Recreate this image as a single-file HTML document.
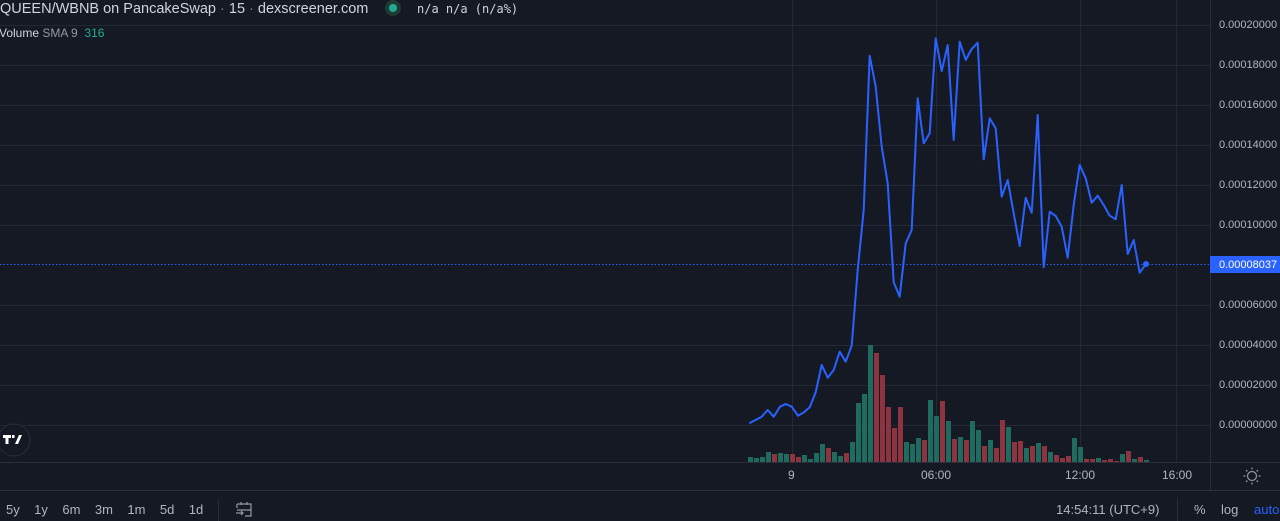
<!DOCTYPE html>
<html><head><meta charset="utf-8"><style>
body{margin:0;width:1280px;height:521px;background:#151924;overflow:hidden;font-family:"Liberation Sans",sans-serif;position:relative}
.t{position:absolute;white-space:nowrap}
.p{position:absolute;left:1219px;font-size:11px;color:#b2b5be;line-height:16px;white-space:nowrap}
</style></head><body>
<svg width="1280" height="521" style="position:absolute;left:0;top:0">
<g stroke="#242834" stroke-width="1">
<line x1="0" y1="25.5" x2="1210" y2="25.5"/><line x1="0" y1="65.5" x2="1210" y2="65.5"/><line x1="0" y1="105.5" x2="1210" y2="105.5"/><line x1="0" y1="145.5" x2="1210" y2="145.5"/><line x1="0" y1="185.5" x2="1210" y2="185.5"/><line x1="0" y1="225.5" x2="1210" y2="225.5"/><line x1="0" y1="305.5" x2="1210" y2="305.5"/><line x1="0" y1="345.5" x2="1210" y2="345.5"/><line x1="0" y1="385.5" x2="1210" y2="385.5"/><line x1="0" y1="425.5" x2="1210" y2="425.5"/>
<line x1="792.5" y1="0" x2="792.5" y2="462"/><line x1="936.5" y1="0" x2="936.5" y2="462"/><line x1="1080.5" y1="0" x2="1080.5" y2="462"/><line x1="1176.5" y1="0" x2="1176.5" y2="462"/>
</g>
<g stroke="#2a2e39"><line x1="1210.5" y1="0" x2="1210.5" y2="490"/><line x1="0" y1="462.5" x2="1280" y2="462.5"/><line x1="0" y1="490.5" x2="1280" y2="490.5"/><line x1="218.5" y1="499" x2="218.5" y2="521"/><line x1="1177.5" y1="499" x2="1177.5" y2="521"/></g>
<line x1="0" y1="264.5" x2="1210" y2="264.5" stroke="#2962ff" stroke-dasharray="1.5,2"/>
<g id="vol"></g>
<polyline fill="none" stroke="#2962ff" stroke-width="2" stroke-linejoin="round" points="749.3,423.3 761.7,416.7 767.7,410 773.7,416.7 780,406.7 785.7,404 791.7,406.7 798,415.7 804,412.3 809.7,407.3 815.7,392.3 821.7,365 827.7,377.7 833.7,370 839.7,351.7 845.7,361.7 851.7,345.7 857.7,270 863.7,210 869.7,55.7 875.7,86.7 881.7,146.7 887.7,183.3 893.7,282.3 899.7,296.7 905.7,243.3 911.7,230 917.7,98.3 923.7,143.3 929.7,133.3 935.7,38.3 941.7,71 947.7,45 953.7,140 959.7,41.7 965.7,60 971.7,49 977.7,42.7 983.7,159.3 989.7,118.3 995.7,128.3 1001.7,196.7 1007.7,180 1013.7,213.3 1019.7,246 1025.7,197.7 1031.7,212.7 1037.7,115 1043.7,267.3 1049.7,211.7 1055.7,216 1061.7,226.7 1067.7,257.7 1073.7,205 1079.7,165 1085.7,178.3 1091.7,202.7 1097.7,195.7 1103.7,205 1109.7,215.7 1115.7,219.3 1121.7,185 1127.7,254 1133.7,240 1139.7,272.7 1145.7,264.3"/>
<circle cx="1146" cy="264" r="3" fill="#2962ff"/>
<rect x="1210" y="256" width="70" height="17" fill="#2962ff"/>
<circle cx="393" cy="8" r="8" fill="#1f3a33"/><circle cx="393" cy="8" r="4" fill="#22ab94"/>
<circle cx="14" cy="440" r="16" fill="#151924" stroke="#2a2e39"/>
<path d="M3 435h8v3h-2.5v6h-3v-6h-2.5z M12 435h2.5v3h-2.5z M19 435h3l-4 9h-3z" fill="#fff"/>
<g fill="none" stroke="#9598a1" stroke-width="1.2"><circle cx="1252" cy="476" r="4.5"/>
<path d="M1252 467.5v2M1252 482.5v2M1243.5 476h2M1258.5 476h2M1246 470l1.4 1.4M1256.6 480.6l1.4 1.4M1246 482l1.4-1.4M1256.6 471.4l1.4-1.4"/>
<path d="M237 504h14v12h-6M237 504v4M241 502v3M247 502v3M237 510h14M236 513h7m-2-2 2 2-2 2"/></g>
</svg>
<div class="t" style="left:0;top:0;font-size:14.5px;color:#d1d4dc;line-height:18px">QUEEN/WBNB on PancakeSwap <span style="color:#787b86">·</span> 15 <span style="color:#787b86">·</span> dexscreener.com</div>
<div class="t" style="left:417px;top:2px;font-size:12px;color:#d1d4dc;font-family:'DejaVu Sans Mono','Liberation Mono',monospace">n/a n/a (n/a%)</div>
<div class="t" style="left:-1px;top:25px;font-size:12px;color:#d1d4dc;line-height:16px">Volume <span style="color:#9598a1">SMA 9</span> &nbsp;<span style="color:#22ab94">316</span></div>
<div class="p" style="top:17px">0.00020000</div>
<div class="p" style="top:57px">0.00018000</div>
<div class="p" style="top:97px">0.00016000</div>
<div class="p" style="top:137px">0.00014000</div>
<div class="p" style="top:177px">0.00012000</div>
<div class="p" style="top:217px">0.00010000</div>
<div class="p" style="top:257px;color:#fff">0.00008037</div>
<div class="p" style="top:297px">0.00006000</div>
<div class="p" style="top:337px">0.00004000</div>
<div class="p" style="top:377px">0.00002000</div>
<div class="p" style="top:417px">0.00000000</div>
<div class="t" style="left:788px;top:468px;font-size:12px;color:#b2b5be">9</div>
<div class="t" style="left:921px;top:468px;font-size:12px;color:#b2b5be">06:00</div>
<div class="t" style="left:1065px;top:468px;font-size:12px;color:#b2b5be">12:00</div>
<div class="t" style="left:1162px;top:468px;font-size:12px;color:#b2b5be">16:00</div>
<div class="t" style="left:6px;top:502px;font-size:13px;color:#b2b5be">5y&nbsp;&nbsp;&nbsp;&nbsp;1y&nbsp;&nbsp;&nbsp;&nbsp;6m&nbsp;&nbsp;&nbsp;&nbsp;3m&nbsp;&nbsp;&nbsp;&nbsp;1m&nbsp;&nbsp;&nbsp;&nbsp;5d&nbsp;&nbsp;&nbsp;&nbsp;1d</div>
<div class="t" style="left:1056px;top:502px;font-size:13px;color:#b2b5be">14:54:11 (UTC+9)</div>
<div class="t" style="left:1194px;top:502px;font-size:13px;color:#b2b5be">%</div>
<div class="t" style="left:1221px;top:502px;font-size:13px;color:#b2b5be">log</div>
<div class="t" style="left:1254px;top:502px;font-size:13px;color:#2962ff">auto</div>
<script>
var d="1281g1284g1281g1266g1272r1269g1272g1272r1281r1275g1287g1269g1242g1254r1266g1278g1269r1236g1119g1092g945g969r1035r1131r1194r1131r1236g1242g1224g1230r1110g1158g1113r1173g1227r1221g1230r1173g1200g1248r1230g1254r1170r1191g1236r1233r1254g1248r1239g1248r1266g1275r1284r1278r1224g1251g1287r1287r1284g1290r1287r1293r1272g1263r1287g1281r1290g";
var m=d.match(/\d+[gr]/g),s="";
m.forEach(function(v,i){var h=(1296-parseInt(v))/3,c=v.slice(-1)=="g"?"#1f6b5f":"#8c3540";s+='<rect x="'+(748+6*i)+'" y="'+(462-h)+'" width="5" height="'+h+'" fill="'+c+'"/>';});
document.getElementById("vol").innerHTML=s;
</script>
</body></html>
